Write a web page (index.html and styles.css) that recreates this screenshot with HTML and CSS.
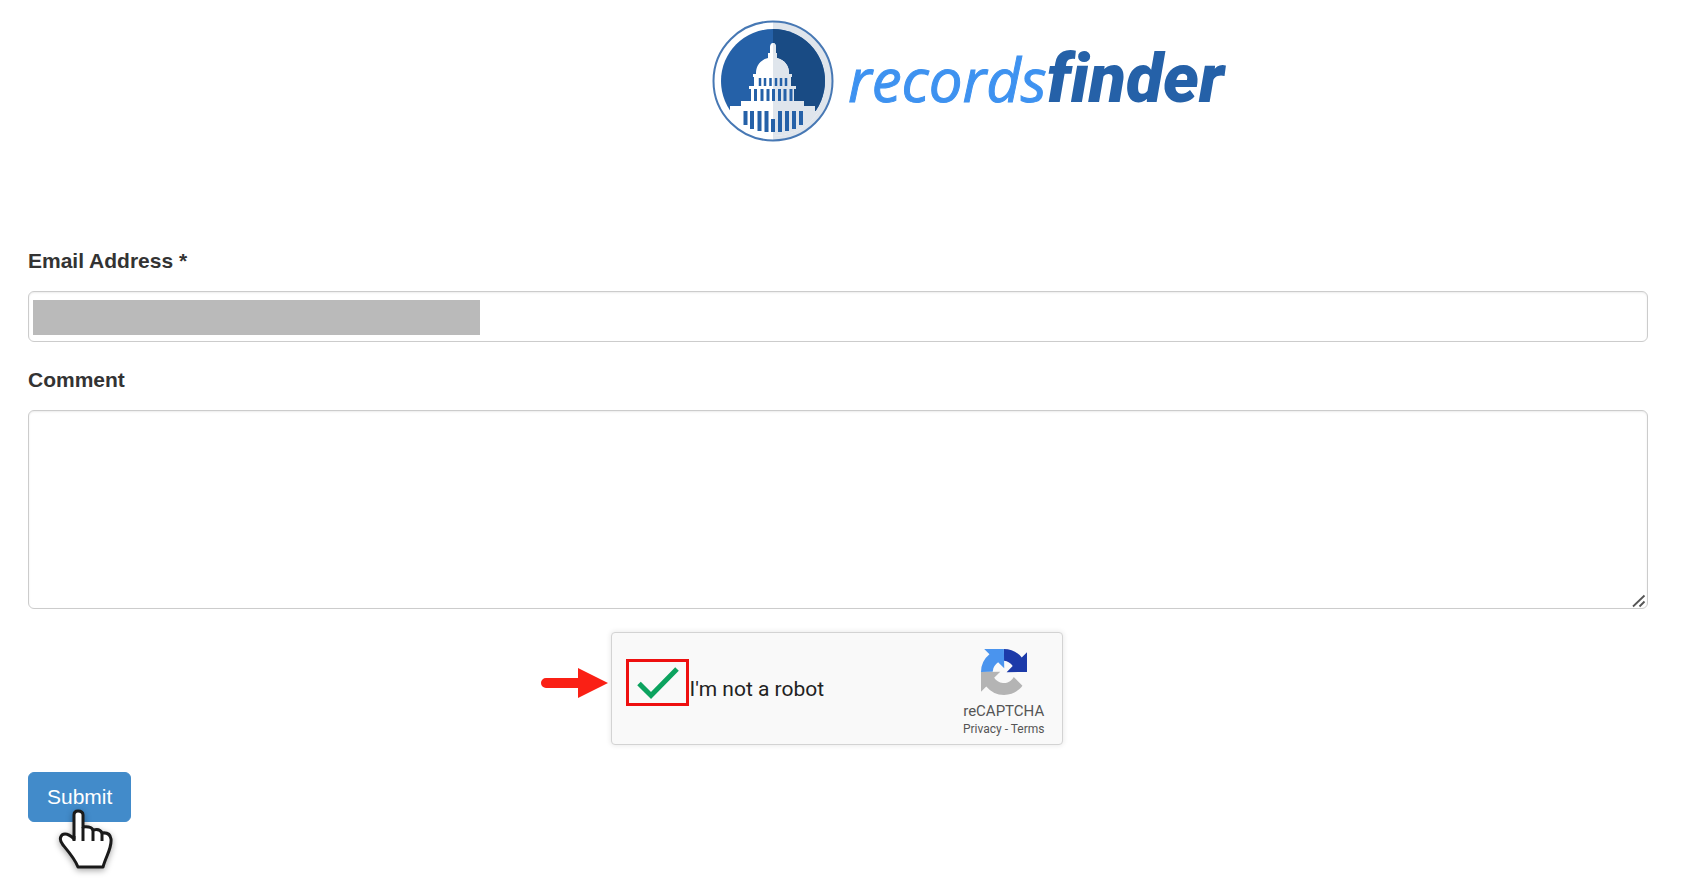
FILE: index.html
```html
<!DOCTYPE html>
<html lang="en">
<head>
<meta charset="utf-8">
<meta name="viewport" content="width=device-width, initial-scale=1">
<title>RecordsFinder</title>
<link rel="stylesheet" href="styles.css">
</head>
<body>
<header class="header">
  <a class="brand" href="#" aria-label="recordsfinder">
    <svg class="brand-mark" viewBox="0 0 122 122" aria-hidden="true">
      <defs>
        <clipPath id="right"><rect x="61" y="0" width="61" height="122"/></clipPath>
        <clipPath id="disc"><circle cx="61" cy="61" r="55"/></clipPath>
        <g id="dome">
          <path d="M61 23c2 0 3 2 3 4v6h1v5c8 2 12 8 12 15v1h3v3h-1v9h5v3h-2v12h10v5h11v5h16v31H3V91h15v-5h11v-5h10V69h-2v-3h5v-9h-1v-3h3v-1c0-7 4-13 12-15v-5h2v-6c0-2 1-4 3-4z"/>
        </g>
      </defs>
      <circle cx="61" cy="61" r="59.5" fill="#fff"/>
      <circle cx="61" cy="61" r="59.5" fill="#dfe5ec" clip-path="url(#right)"/>
      <circle cx="61" cy="61" r="59.5" fill="none" stroke="#4778b4" stroke-width="2"/>
      <circle cx="61" cy="61" r="52" fill="#2561a8"/>
      <circle cx="61" cy="61" r="52" fill="#194b84" clip-path="url(#right)"/>
      <g clip-path="url(#disc)">
        <use href="#dome" fill="#fff"/>
        <use href="#dome" fill="#dfe5ec" clip-path="url(#right)"/>
      </g>
      <g stroke="#2561a8" stroke-width="3">
        <path d="M48 58v8M53 58v8M58.500 58v8M64 58v8M69 58v8M74 58v8" stroke-width="2.500"/>
        <path d="M43.500 69v12M50 69v12M56 69v12M61.500 69v12M67.500 69v12M73 69v12M79 69v12"/>
        <path d="M33.500 91v14M40 91v18M47.500 91v20M54.500 91v21M61 99v13M68 91v21M75 91v20M82 91v18M89 91v14" stroke-width="4"/>
      </g>
    </svg>
    <span class="brand-name"><span class="brand-light">records</span><span class="brand-bold">finder</span></span>
  </a>
</header>
<main>
  <form class="form">
    <div class="field">
      <label for="email">Email Address *</label>
      <div class="control">
        <input class="input" id="email" type="email" required>
        <span class="mask"></span>
      </div>
    </div>
    <div class="field">
      <label for="comment">Comment</label>
      <div class="control">
        <textarea class="input textarea" id="comment"></textarea>
        <svg class="grip" viewBox="0 0 14 14" aria-hidden="true"><path d="M1 12.500L12.500 1.500M7.500 12.500L12.500 7.500" fill="none" stroke="#555" stroke-width="1.800"/></svg>
      </div>
    </div>
    <div class="captcha">
      <svg class="arrow" viewBox="0 0 68 30" aria-hidden="true"><path d="M6 10H38V0L68 15L38 30V20H6A5 5 0 0 1 6 10z" fill="#fa2015"/></svg>
      <label class="robot">
        <span class="tick">
          <input class="tick-box" type="checkbox" checked>
          <svg class="tick-mark" viewBox="0 0 44 34" aria-hidden="true"><path d="M3 17.500L15 29.500L41 3" fill="none" stroke="#0ca35f" stroke-width="5"/></svg>
        </span>
        <span>I'm not a robot</span>
      </label>
      <div class="badge">
        <svg class="badge-mark" viewBox="0 0 64 64" aria-hidden="true">
          <path fill="#1c3aa9" d="M64 31.950a32 32 0 0 0-.016-.916V4.508l-7.333 7.333A31.940 31.940 0 0 0 31.870.025L32 16.500c5.096.402 9.514 3.214 12.115 7.296l-8.508 8.508z"/>
          <path fill="#4a94ee" d="M31.860.030c-.309.005-.610.009-.916.017H4.420l7.333 7.333A31.930 31.930 0 0 0 0 32.150L16.360 31.560c0-.497.058-.88.167-1.162.402-5.096 3.214-9.514 7.296-12.115l8.508 8.508z"/>
          <path fill="#b4b4b4" d="M0 31.950c.003.308.008.612.016.916v26.520l7.333-7.333A31.940 31.940 0 0 0 32.130 63.870c10.430 0 19.690-4.988 25.530-12.715L45.640 39.010a15.930 15.930 0 0 1-4.870 5.463c-2.100 1.640-5.076 2.980-9.190 2.980-.497 0-.88-.058-1.162-.167-5.096-.402-9.514-3.214-12.115-7.296l8.508-8.508z"/>
        </svg>
        <span class="badge-name">reCAPTCHA</span>
        <span class="badge-links"><a href="#">Privacy</a> - <a href="#">Terms</a></span>
      </div>
    </div>
    <div class="actions">
      <button class="submit" type="button">Submit</button>
      <svg class="pointer" viewBox="0 0 60 64" aria-hidden="true">
        <path d="M16 31V7Q16 3 20 3Q25 3 25 7V19Q33 18 35 22Q42 20 44 25Q52 24 53 31C54 40 48 48 45 59H20C17 51 10 43 5 37C0 31 3 26 7 26Q11 26 16 31z" fill="#fff" stroke="#1a1a1a" stroke-width="3" stroke-linejoin="round"/>
        <path d="M16 28V33M25 19V33M35 22V33M44 25V33" fill="none" stroke="#1a1a1a" stroke-width="3"/>
      </svg>
    </div>
  </form>
</main>
</body>
</html>
```
FILE: styles.css
```css
* { box-sizing: border-box; }
body {
  margin: 0;
  background: #fff;
  color: #333;
  font-family: "Liberation Sans", Arial, sans-serif;
  font-size: 21px;
  line-height: 30px;
}
.header {
  display: flex;
  justify-content: center;
  padding: 20px 0 0 252px;
}
.brand {
  display: flex;
  align-items: center;
  gap: 14px;
  text-decoration: none;
}
.brand-mark { width: 122px; height: 122px; }
.brand-name {
  padding-bottom: 4px;
  font-family: "Open Sans", "Noto Sans", sans-serif;
  font-size: 60px;
  font-style: italic;
  font-variant-ligatures: none;
  line-height: 80px;
}
.brand-light { color: #3e92f0; -webkit-text-stroke: 1px #3e92f0; }
.brand-bold {
  color: #2561a8;
  font-family: Roboto, sans-serif;
  font-size: 68px;
  font-weight: 900;
}
.form {
  display: flex;
  flex-direction: column;
  gap: 23px;
  padding: 104px 36px 56px 28px;
}
.field { display: flex; flex-direction: column; gap: 15px; font-weight: 700; }
.control { position: relative; display: flex; }
.input {
  width: 100%;
  height: 51px;
  margin: 0;
  padding: 8px 16px;
  border: 1px solid #ccc;
  border-radius: 6px;
  background: #fff;
  box-shadow: inset 0 1px 2px rgba(0, 0, 0, .08);
  font: inherit;
  font-weight: 400;
  color: #555;
}
.textarea { height: 199px; resize: none; }
.mask {
  position: absolute;
  left: 5px;
  top: 9px;
  width: 447px;
  height: 35px;
  background: #bababa;
}
.grip { position: absolute; right: 2px; bottom: 1px; width: 14px; height: 14px; }
.captcha {
  position: relative;
  align-self: center;
  display: flex;
  align-items: center;
  justify-content: space-between;
  width: 452px;
  height: 113px;
  margin-right: 3px;
  padding: 0 17px 0 14px;
  border: 1px solid #d3d3d3;
  border-radius: 4px;
  background: #f9f9f9;
  box-shadow: 0 0 5px 1px rgba(0, 0, 0, .08);
  font-family: Roboto, sans-serif;
}
.arrow { position: absolute; right: 454px; top: 35px; width: 68px; height: 30px; }
.robot { display: flex; align-items: center; gap: 1px; color: #222; font-size: 21px; }
.tick { position: relative; display: flex; width: 63px; height: 47px; margin-bottom: 12px; }
.tick-box {
  appearance: none;
  width: 100%;
  height: 100%;
  margin: 0;
  border: 3px solid #ee1010;
}
.tick-mark { position: absolute; left: 10px; top: 7px; width: 44px; height: 34px; }
.badge { display: flex; flex-direction: column; align-items: center; padding-top: 8px; color: #555; }
.badge-mark { width: 46px; height: 46px; }
.badge-name { margin-top: 6px; font-size: 15px; line-height: 20px; }
.badge-links { font-size: 12px; line-height: 16px; }
.badge-links a { color: inherit; text-decoration: none; }
.actions { position: relative; padding-top: 4px; }
.submit {
  display: block;
  height: 50px;
  padding: 0 18px;
  border: 1px solid #428bca;
  border-radius: 6px;
  background: #428bca;
  color: #fff;
  font: inherit;
}
.pointer {
  position: absolute;
  left: 30px;
  top: 40px;
  width: 60px;
  height: 64px;
  filter: drop-shadow(0 2px 3px rgba(0, 0, 0, .35));
}
```
